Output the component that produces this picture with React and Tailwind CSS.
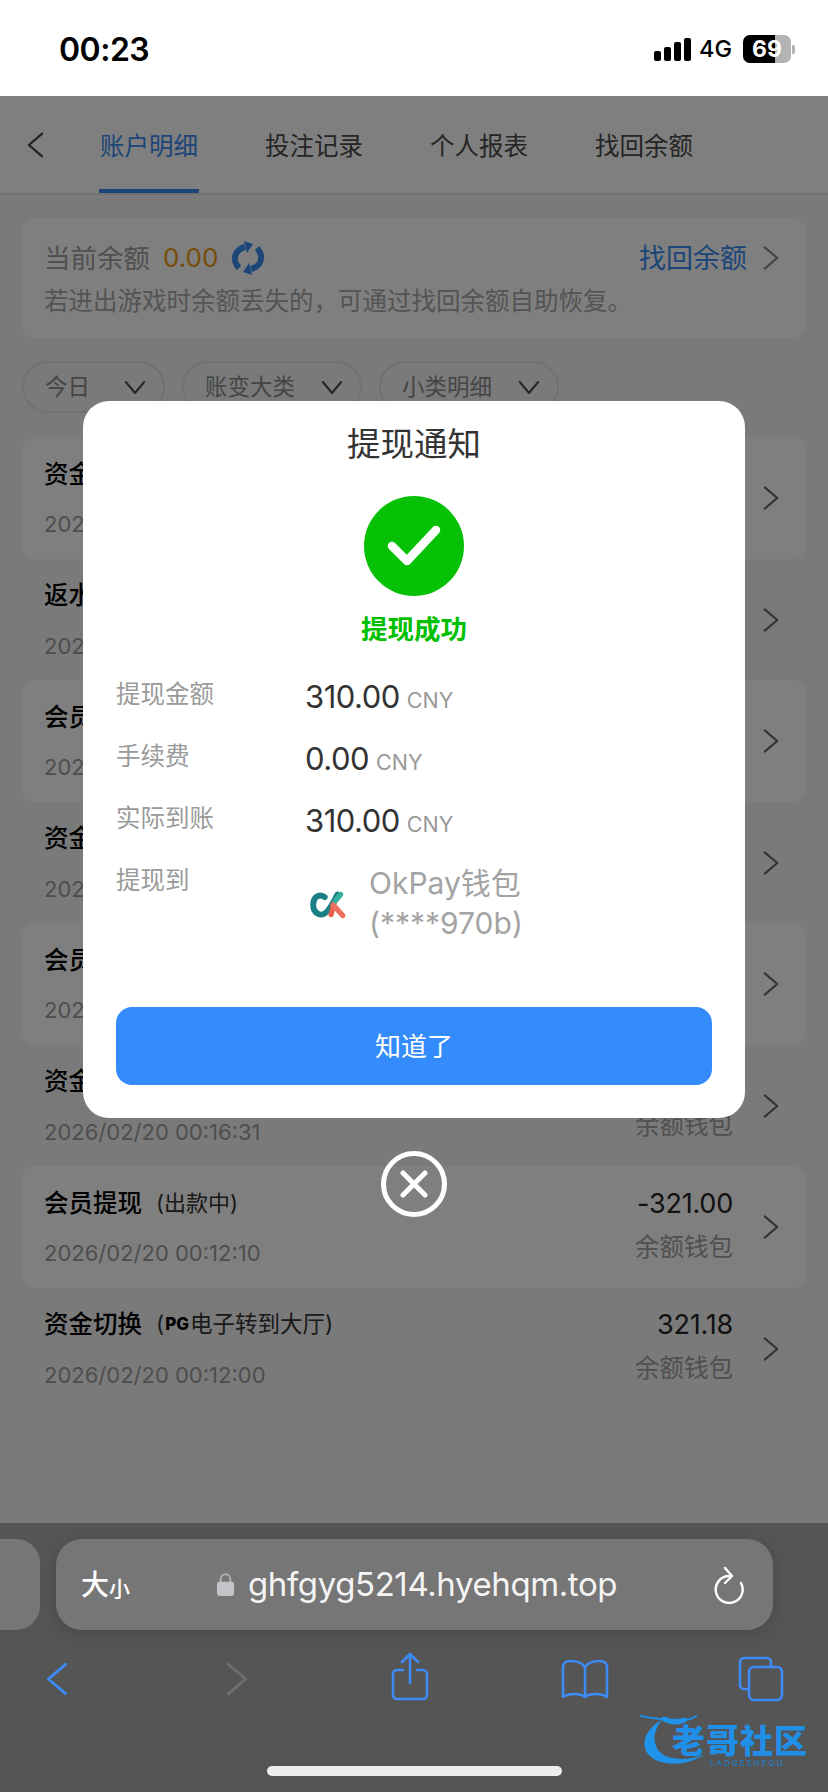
import React from "react";

const FONT = "[font-family:Inter,'Noto_Sans_CJK_SC',sans-serif]";

// only what shows around the dialog
const rows = [
  { title: "资金", date: "2026", card: true },
  { title: "返水", date: "2026", card: false },
  { title: "会员", date: "2026", card: true },
  { title: "资金", date: "2026", card: false },
  { title: "会员", date: "2026", card: true },
  { title: "资金", date: "2026/02/20 00:16:31", wallet: true, card: false },
  { title: "会员提现", note: "(出款中)", date: "2026/02/20 00:12:10", amount: "-321.00", wallet: true, card: true },
  { title: "资金切换", date: "2026/02/20 00:12:00", amount: "321.18", wallet: true, card: false, pg: true },
];

function Chevron({ className = "", dir = "right" }) {
  return (
    <svg viewBox="0 0 18 28" className={className} fill="none" stroke="currentColor" strokeWidth="2.4" strokeLinecap="round" strokeLinejoin="round">
      {dir === "right" ? <path d="M2 2l14 12L2 26" /> : <path d="M16 2L2 14l14 12" />}
    </svg>
  );
}

function ChevronDown() {
  return (
    <svg viewBox="0 0 24 16" className="w-[22px] h-[15px] text-[#4a4a4a]" fill="none" stroke="currentColor" strokeWidth="2.2" strokeLinecap="round" strokeLinejoin="round">
      <path d="M2 2l10 12L22 2" />
    </svg>
  );
}

function Filter({ label, w }) {
  return (
    <div className={`${w} h-[52px] rounded-[26px] border-2 border-[#e2e2e2] flex items-center justify-between pl-[21px] pr-[17px] text-[22.5px] text-[#8a8a8a]`}>
      <span>{label}</span>
      <ChevronDown />
    </div>
  );
}

function Row({ row }) {
  return (
    <div className={`h-[121.5px] mx-[22px] pl-[22px] pr-[27px] flex items-start justify-between rounded-[14px] ${row.card ? "bg-white" : ""}`}>
      <div className="pt-[21px]">
        <div className="h-[32px] flex items-center text-[24.5px] font-medium text-black leading-none">
          {row.title}
          {row.note && <span className="ml-[14px] text-[22px] font-normal text-[#333]">{row.note}</span>}
          {row.pg && (
            <span className="ml-[14px] text-[22.5px] font-normal text-[#333] flex items-center">
              (<span className="text-[17px] font-extrabold text-black mx-[1px]">PG</span>电子转到大厅)
            </span>
          )}
        </div>
        <div className="h-[32px] mt-[18px] flex items-center text-[22px] text-[#9c9c9c] leading-none">{row.date}</div>
      </div>
      <div className="flex items-center">
        <div className="pt-[21px] text-right self-start">
          <div className="h-[32px] flex items-center justify-end text-[27px] tracking-[-0.2px] text-[#222] leading-none">{row.amount}</div>
          {row.wallet && <div className="h-[32px] mt-[12px] flex items-center justify-end text-[24.5px] text-[#a0a0a0] leading-none">余额钱包</div>}
        </div>
        <div className="ml-[30px] self-start pt-[46px]">
          <Chevron className="w-[16px] h-[30px] text-[#666]" />
        </div>
      </div>
    </div>
  );
}

function DetailRow({ label, value }) {
  return (
    <div className="h-[62px] flex items-start">
      <div className="w-[189px] h-[34px] flex items-center text-[24.5px] text-[#9a9a9a] leading-none">{label}</div>
      <div className="flex items-baseline h-[34px] pt-[4px] leading-none">
        <span className="text-[31px] tracking-[-0.5px] text-[#333]">{value}</span>
        <span className="ml-[7px] text-[21.5px] text-[#999]">CNY</span>
      </div>
    </div>
  );
}

function WithdrawModal() {
  return (
    <div className="absolute inset-0 bg-black/50 flex flex-col items-center pt-[305px]">
      <div className="w-[662px] h-[717px] bg-white rounded-[26px] px-[33px] flex flex-col items-stretch">
        <div className="h-[95px] pt-[23px] text-center text-[33.5px] leading-[40px] text-[#333]">提现通知</div>
        <div className="flex justify-center">
          <div className="w-[100px] h-[100px] rounded-full bg-[#07c107] flex items-center justify-center">
            <svg viewBox="0 0 56 44" className="w-[56px] h-[44px]" fill="none" stroke="white" strokeWidth="8.5" strokeLinecap="round" strokeLinejoin="round">
              <path d="M6 22l15 15L50 6" />
            </svg>
          </div>
        </div>
        <div className="mt-[16px] h-[34px] flex items-center justify-center text-[26.5px] font-bold text-[#00c000] leading-none">提现成功</div>
        <div className="mt-[31px]">
          <DetailRow label="提现金额" value="310.00" />
          <DetailRow label="手续费" value="0.00" />
          <DetailRow label="实际到账" value="310.00" />
          <div className="flex items-start h-[90px]">
            <div className="w-[189px] h-[34px] flex items-center text-[24.5px] text-[#9a9a9a] leading-none">提现到</div>
            <div className="flex items-center">
              <svg viewBox="0 0 36 26" className="w-[38px] h-[28px] mr-[21px] ml-[5px] mt-[4px]" fill="none" strokeLinecap="round">
                <path d="M14 5.5C8 1.5 3 6 3 13s5.5 11 11 8c4-2.5 8-10 12-18" stroke="#1b7f86" strokeWidth="5.5" />
                <path d="M20 22c1-3 2-9 3-11" stroke="#e8604c" strokeWidth="5" />
                <path d="M22 13l9 10" stroke="#ef6f5e" strokeWidth="5" />
                <path d="M24 9l5-6" stroke="#35b09f" strokeWidth="5" />
              </svg>
              <div className="text-[30px] leading-[40px] text-[#a3a3a3] w-[170px]">OkPay钱包 (****970b)</div>
            </div>
          </div>
        </div>
        <div className="mt-[54px] h-[78px] rounded-[16px] bg-[#348bfb] flex items-center justify-center text-[26px] text-white">知道了</div>
      </div>
      <div className="mt-[33px] w-[66px] h-[66px] rounded-full border-[5px] border-white flex items-center justify-center">
        <svg viewBox="0 0 28 28" className="w-[28px] h-[28px]" fill="none" stroke="white" strokeWidth="5" strokeLinecap="round">
          <path d="M3 3l22 22M25 3L3 25" />
        </svg>
      </div>
    </div>
  );
}

function SafariBar() {
  return (
    <div className="h-[269px] bg-[#555] relative shrink-0">
      <div className="pt-[16px] h-[107px] flex gap-[16px]">
        <div className="w-[40px] h-[91px] rounded-r-[24px] bg-[#767676]" />
        <div className="w-[717px] h-[91px] rounded-[26px] bg-[#767676] shadow-[0_4px_16px_rgba(0,0,0,0.15)] flex items-center pl-[25px] pr-[28px] text-white">
          <div className="w-[135px] flex items-end leading-none font-medium">
            <span className="text-[28px]">大</span>
            <span className="text-[21px]">小</span>
          </div>
          <svg viewBox="0 0 20 26" className="w-[19px] h-[25px] mr-[13px]">
            <path d="M5 11V7a5 5 0 0 1 10 0v4" fill="none" stroke="#a9a9ad" strokeWidth="2.4" />
            <rect x="1" y="10" width="18" height="15" rx="2.5" fill="#c4c4c8" />
          </svg>
          <span className="text-[33px] tracking-[-0.4px] leading-none flex-1 text-[#f4f4f4]">ghfgyg5214.hyehqm.top</span>
          <svg viewBox="0 0 32 38" className="w-[32px] h-[38px]" fill="none" stroke="white" strokeWidth="2.4" strokeLinecap="round" strokeLinejoin="round">
            <path d="M16 10A13.5 13.5 0 1 0 28 17" />
            <path d="M12 2l7 8-7 7" />
          </svg>
        </div>
      </div>
      <div className="pt-[30px] h-[60px] flex items-start pl-[46px]">
        <Chevron dir="left" className="w-[22px] h-[38px] text-[#3d8bf6]" />
        <Chevron className="w-[22px] h-[38px] text-[#6e6e6e] ml-[158px]" />
        <svg viewBox="0 0 38 48" className="w-[38px] h-[48px] ml-[143px] -mt-[7px]" fill="none" stroke="#3d8bf6" strokeWidth="2.6" strokeLinecap="round" strokeLinejoin="round">
          <path d="M19 30V2M11 9l8-8 8 8" />
          <path d="M12 17H6a4 4 0 0 0-4 4v21a4 4 0 0 0 4 4h26a4 4 0 0 0 4-4V21a4 4 0 0 0-4-4h-6" />
        </svg>
        <svg viewBox="0 0 48 40" className="w-[48px] h-[40px] ml-[132px] -mt-[1px]" fill="none" stroke="#3d8bf6" strokeWidth="2.6" strokeLinecap="round" strokeLinejoin="round">
          <path d="M24 8C21 3 15 2 9 2 5 2 2 4 2 8v30c6-4 17-4 22 0 5-4 16-4 22 0V8c0-4-3-6-7-6-6 0-12 1-15 6zM24 8v30" />
        </svg>
        <svg viewBox="0 0 46 46" className="w-[46px] h-[46px] ml-[129px] -mt-[4px]" fill="none" stroke="#3d8bf6" strokeWidth="2.6" strokeLinejoin="round">
          <path d="M11 33H6a4 4 0 0 1-4-4V6a4 4 0 0 1 4-4h23a4 4 0 0 1 4 4v5" />
          <rect x="11" y="11" width="33" height="33" rx="5" />
        </svg>
      </div>
      {/* 老哥社区 watermark */}
      <div className="absolute left-[640px] top-[185px] w-[176px] h-[64px]">
        <svg viewBox="0 0 176 64" className="absolute inset-0 w-full h-full" fill="none" strokeLinecap="round">
          <path d="M22 12C6 20 0 36 8 46c10 12 36 14 58 0-20 8-40 6-48-4C12 32 14 22 22 12z" fill="#1f94ea" />
          <path d="M1 8c14 3 30 4 42 4 5 0 9-1 13-4" stroke="#1c8ee4" strokeWidth="2" />
          <path d="M24 11c6 3 14 4 20 1" stroke="#1f94ea" strokeWidth="5" />
        </svg>
        <div className="absolute left-[32px] top-[17px] text-[33px] leading-none font-black text-[#1f8fe8] whitespace-nowrap tracking-[1px]">老哥社区</div>
        <div className="absolute left-[70px] top-[51px] text-[8px] leading-none text-[#1c7fcc] tracking-[2px] whitespace-nowrap">LAOGESHEQU</div>
      </div>
      <div className="absolute left-[267px] top-[243px] w-[295px] h-[10px] rounded-full bg-[#eee]" />
    </div>
  );
}

export default function App() {
  return (
    <div className={`w-[828px] h-[1792px] flex flex-col overflow-hidden bg-white ${FONT}`}>
      {/* status bar */}
      <div className="h-[96px] shrink-0 flex items-start justify-between pt-[32px] pl-[59px] pr-[33px] bg-white text-black">
        <span className="text-[32px] leading-[36px] tracking-[-0.5px] font-semibold">00:23</span>
        <div className="flex items-center h-[34px]">
          <div className="flex items-end gap-[3px] h-[24px]">
            <div className="w-[7px] h-[10px] rounded-[2px] bg-black" />
            <div className="w-[7px] h-[14px] rounded-[2px] bg-black" />
            <div className="w-[7px] h-[19px] rounded-[2px] bg-black" />
            <div className="w-[7px] h-[23px] rounded-[2px] bg-black" />
          </div>
          <span className="ml-[8px] text-[23.5px] leading-none font-medium">4G</span>
          <div className="ml-[11px] relative w-[48px] h-[28px] rounded-[7px] bg-[#b3b3b3] overflow-hidden">
            <div className="absolute inset-y-0 left-0 w-[32px] bg-black" />
            <span className="absolute inset-0 flex items-center justify-center text-[23px] font-bold text-white leading-none">69</span>
          </div>
          <div className="ml-[1px] w-[3px] h-[9px] rounded-r-[2px] bg-[#b3b3b3]" />
        </div>
      </div>

      {/* page under the dialog */}
      <div className="flex-1 relative bg-[#f5f5f5] overflow-hidden">
        <div className="h-[99px] bg-white border-b-2 border-[#e2e2e2] flex items-stretch pl-[27px]">
          <div className="w-[72px] flex items-center">
            <Chevron dir="left" className="w-[17px] h-[28px] text-[#444]" />
          </div>
          <div className="flex gap-[65px] text-[24.5px] text-[#4a4a4a]">
            <div className="w-[100px] flex items-center justify-center pt-[7px] text-[#3a8cf0] border-b-[4px] border-[#3a8cf0] rounded-b-[1px]">账户明细</div>
            <div className="w-[100px] flex items-center justify-center pt-[3px]">投注记录</div>
            <div className="w-[100px] flex items-center justify-center pt-[3px]">个人报表</div>
            <div className="w-[100px] flex items-center justify-center pt-[3px]">找回余额</div>
          </div>
        </div>

        <div className="mt-[23px] mx-[22px] h-[120px] rounded-[14px] bg-white pl-[22px] pr-[27px] pt-[22px]">
          <div className="flex items-center justify-between h-[36px]">
            <div className="flex items-center">
              <span className="text-[26.5px] text-[#a0a0a0] leading-none">当前余额</span>
              <span className="ml-[13px] text-[26px] text-[#ee9a10] leading-none">0.00</span>
              <svg viewBox="0 0 34 34" className="ml-[13px] w-[34px] h-[34px]" fill="none" stroke="#3a8cf0" strokeWidth="6">
                <path d="M14 6C7 8 3 13 4 20c1 3 2 5 4 7" />
                <path d="M20 28c7-2 11-7 10-14-1-3-2-5-4-7" />
                <path d="M13 0l9 3-6 9z" fill="#3a8cf0" stroke="none" />
                <path d="M21 34l-9-3 6-9z" fill="#3a8cf0" stroke="none" />
              </svg>
            </div>
            <div className="flex items-center">
              <span className="text-[27px] text-[#3a8cf0] leading-none">找回余额</span>
              <Chevron className="ml-[16px] w-[16px] h-[30px] text-[#888]" />
            </div>
          </div>
          <div className="mt-[9px] text-[24.5px] leading-[32px] text-[#a8a8a8]">若进出游戏时余额丢失的，可通过找回余额自助恢复。</div>
        </div>

        <div className="mt-[23px] ml-[22px] flex gap-[17px]">
          <Filter label="今日" w="w-[143px]" />
          <Filter label="账变大类" w="w-[180px]" />
          <Filter label="小类明细" w="w-[180px]" />
        </div>

        <div className="mt-[24px]">
          {rows.map((row, i) => (
            <Row key={i} row={row} />
          ))}
        </div>

        <WithdrawModal />
      </div>

      <SafariBar />
    </div>
  );
}
